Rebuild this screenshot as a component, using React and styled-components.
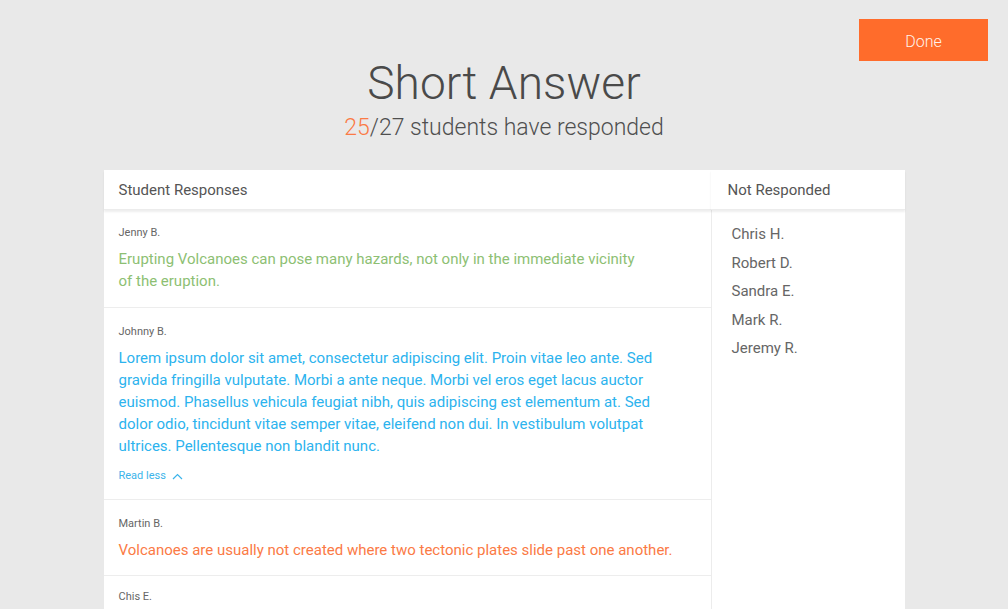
import React from "react";
import styled, { createGlobalStyle } from "styled-components";

const Global = createGlobalStyle`
  html, body { margin: 0; padding: 0; background: #e9e9e9; overflow: hidden; }
  body { font-family: Roboto, "Liberation Sans", sans-serif; color: #555; }
  * { box-sizing: border-box; }
`;

const Page = styled.div`
  width: 1008px;
  height: 609px;
  padding-top: 19px;
  overflow: hidden;
`;

const Header = styled.header`
  display: grid;
  grid-template-columns: 1fr auto 1fr;
  align-items: start;
`;

const TitleBlock = styled.div`
  grid-column: 2;
  padding-top: 37px;
  text-align: center;
`;

const Title = styled.h1`
  margin: 0;
  font-size: 46px;
  line-height: 54px;
  font-weight: 300;
  color: #4a4a4a;
  letter-spacing: 0.1px;
`;

const Subtitle = styled.p`
  margin: 4px 0 0;
  font-size: 23px;
  line-height: 27px;
  font-weight: 300;
  color: #4f4f4f;
`;

const Count = styled.span`
  color: #fb7a45;
`;

const DoneButton = styled.button`
  grid-column: 3;
  justify-self: end;
  margin-right: 20px;
  width: 129px;
  height: 42px;
  padding-top: 4px;
  border: none;
  background: #ff6c2b;
  color: #fff3ea;
  font-family: Roboto, "Liberation Sans", sans-serif;
  font-size: 16px;
  font-weight: 300;
  cursor: pointer;
`;

const Card = styled.section`
  margin: 29px auto 0;
  width: 801px;
  background: #fff;
  display: grid;
  grid-template-columns: 607px 194px;
  grid-template-rows: 40px auto;
`;

const HeadCell = styled.div`
  display: flex;
  align-items: center;
  padding-left: ${(p) => p.$pad}px;
  font-size: 15px;
  color: #555;
  background: #fff;
  box-shadow: 0 2px 2px rgba(0, 0, 0, 0.07);
  border-bottom: 1px solid #ececec;
  position: relative;
  z-index: 1;
`;

const Responses = styled.div`
  display: flex;
  flex-direction: column;
`;

const Row = styled.article`
  padding: 16px 15px 15px;
  border-bottom: 1px solid #ededed;
  &:first-child {
    padding-top: 15px;
  }
  &:nth-child(3) {
    padding-bottom: 14px;
  }
  &:last-child {
    padding-top: 13px;
    border-bottom: none;
  }
`;

const Name = styled.div`
  font-size: 11px;
  line-height: 16px;
  color: #666;
`;

const Answer = styled.p`
  margin: 7px 0 0;
  font-size: 15px;
  line-height: 22px;
  white-space: nowrap;
  color: ${(p) => p.$color};
`;

const ReadLess = styled.button`
  margin-top: 11px;
  padding: 0;
  border: none;
  background: none;
  display: flex;
  align-items: center;
  gap: 6px;
  font-family: Roboto, "Liberation Sans", sans-serif;
  font-size: 11px;
  line-height: 16px;
  color: #3bb4ea;
  cursor: pointer;
`;

const Missing = styled.ul`
  list-style: none;
  margin: 0;
  padding: 10px 0 0 20px;
  border-left: 1px solid #ececec;
`;

const MissingName = styled.li`
  font-size: 15px;
  line-height: 28.5px;
  color: #666;
`;

const responses = [
  {
    name: "Jenny B.",
    color: "#8dbf73",
    lines: [
      "Erupting Volcanoes can pose many hazards, not only in the immediate vicinity",
      "of the eruption.",
    ],
  },
  {
    name: "Johnny B.",
    color: "#2cb3ee",
    expanded: true,
    lines: [
      "Lorem ipsum dolor sit amet, consectetur adipiscing elit. Proin vitae leo ante. Sed",
      "gravida fringilla vulputate. Morbi a ante neque. Morbi vel eros eget lacus auctor",
      "euismod. Phasellus vehicula feugiat nibh, quis adipiscing est elementum at. Sed",
      "dolor odio, tincidunt vitae semper vitae, eleifend non dui. In vestibulum volutpat",
      "ultrices. Pellentesque non blandit nunc.",
    ],
  },
  {
    name: "Martin B.",
    color: "#fb7a45",
    lines: ["Volcanoes are usually not created where two tectonic plates slide past one another."],
  },
  {
    name: "Chis E.",
    color: "#8dbf73",
    lines: [],
  },
];

const missing = ["Chris H.", "Robert D.", "Sandra E.", "Mark R.", "Jeremy R."];

const Chevron = () => (
  <svg width="11" height="7" viewBox="0 0 11 7" fill="none">
    <path d="M1 6 L5.5 1.5 L10 6" stroke="#3bb4ea" strokeWidth="1.2" />
  </svg>
);

export default function App() {
  return (
    <>
      <Global />
      <Page>
        <Header>
          <TitleBlock>
            <Title>Short Answer</Title>
            <Subtitle>
              <Count>25</Count>/27 students have responded
            </Subtitle>
          </TitleBlock>
          <DoneButton>Done</DoneButton>
        </Header>
        <Card>
          <HeadCell $pad={15}>Student Responses</HeadCell>
          <HeadCell $pad={17}>Not Responded</HeadCell>
          <Responses>
            {responses.map((r) => (
              <Row key={r.name}>
                <Name>{r.name}</Name>
                {r.lines.length > 0 && (
                  <Answer $color={r.color}>
                    {r.lines.map((l, i) => (
                      <React.Fragment key={i}>
                        {i > 0 && <br />}
                        {l}
                      </React.Fragment>
                    ))}
                  </Answer>
                )}
                {r.expanded && (
                  <ReadLess>
                    Read less <Chevron />
                  </ReadLess>
                )}
              </Row>
            ))}
          </Responses>
          <Missing>
            {missing.map((m) => (
              <MissingName key={m}>{m}</MissingName>
            ))}
          </Missing>
        </Card>
      </Page>
    </>
  );
}
